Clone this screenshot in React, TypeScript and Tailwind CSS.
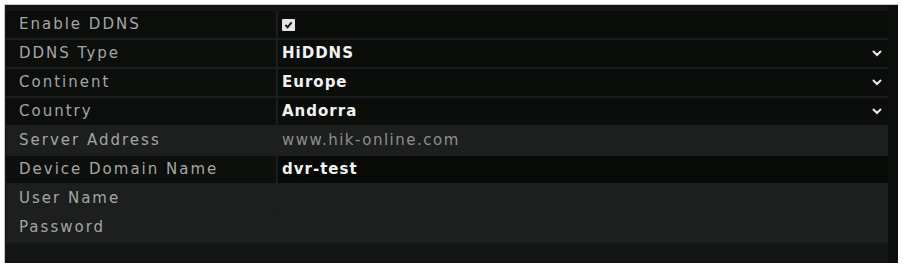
import React from "react";

const font = { fontFamily: '"DejaVu Sans", Verdana, sans-serif' };

function Chevron() {
  return (
    <svg width="10" height="7" viewBox="0 0 10 7" className="mr-[6px]">
      <path d="M1.5 1.5 L5 5 L8.5 1.5" fill="none" stroke="#e8e8e8" strokeWidth="2" strokeLinecap="round" />
    </svg>
  );
}

function Check() {
  return (
    <div className="w-[13px] h-[12px] bg-[#e4e4e4] flex items-center justify-center rounded-[1px]">
      <svg width="9" height="8" viewBox="0 0 10 9">
        <path d="M1.5 4.5 L4 7 L8.5 1.5" fill="none" stroke="#1a1a1a" strokeWidth="2.2" />
      </svg>
    </div>
  );
}

type Row = {
  label: string;
  value?: React.ReactNode;
  dropdown?: boolean;
  kind: "dark" | "grey" | "edit";
};

const V = ({ children }: { children: React.ReactNode }) => (
  <span className="text-[#f2f2f2] font-bold text-[15px] tracking-[1px]">{children}</span>
);

const rows: Row[] = [
  { label: "Enable DDNS", value: <Check />, kind: "dark" },
  { label: "DDNS Type", value: <V>HiDDNS</V>, dropdown: true, kind: "dark" },
  { label: "Continent", value: <V>Europe</V>, dropdown: true, kind: "dark" },
  { label: "Country", value: <V>Andorra</V>, dropdown: true, kind: "dark" },
  {
    label: "Server Address",
    value: <span className="text-[#8e908e] text-[15px] tracking-[1.5px]">www.hik-online.com</span>,
    kind: "grey",
  },
  { label: "Device Domain Name", value: <V>dvr-test</V>, kind: "edit" },
  { label: "User Name", kind: "grey" },
  { label: "Password", kind: "grey" },
];

export default function App() {
  return (
    <div className="w-[904px] h-[267px] bg-white pt-[4px] pl-[4px] pr-[6px] pb-[4px]" style={font}>
      <div className="h-full border-l border-t border-[#c8c8c8] bg-[#141614] flex">
        <div className="flex-1 flex flex-col pt-[6px] pl-[1px]">
          {rows.map((r, i) => {
            const labelBg = r.kind === "dark" ? "bg-[#0c0e0c]" : r.kind === "edit" ? "bg-[#0d0f0d]" : "bg-[#1c1f1d]";
            const valueBg = r.kind === "dark" ? "bg-[#0b0d0b]" : r.kind === "edit" ? "bg-[#080a08]" : "bg-[#1c1f1d]";
            return (
              <div key={i} className="h-[29px] flex border-b-[2px] border-[#1b1e1c]">
                <div className={`w-[270px] ${labelBg} flex items-center pl-[13px] text-[15px] text-[#a4a6a4] tracking-[2px]`}>
                  {r.label}
                </div>
                <div className="w-[2px] bg-[#1b1e1c]" />
                <div className={`flex-1 ${valueBg} flex items-center justify-between pl-[4px]`}>
                  <div className="flex items-center">{r.value}</div>
                  {r.dropdown && <Chevron />}
                </div>
              </div>
            );
          })}
        </div>
        <div className="w-[10px] bg-[#0c0e0c]" />
      </div>
    </div>
  );
}
